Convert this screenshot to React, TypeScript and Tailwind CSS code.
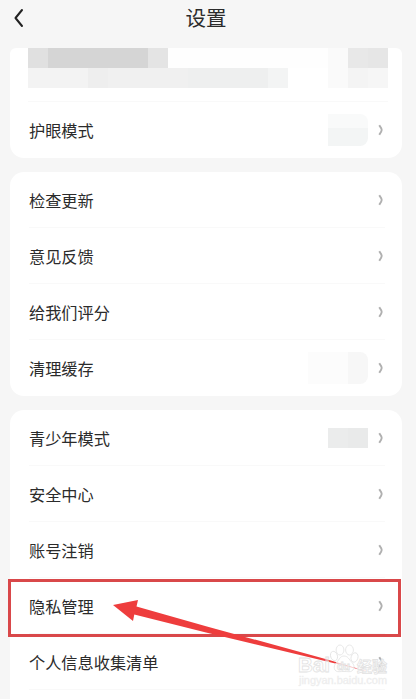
type Tile = { w: string; color: string };

const topTiles: Tile[] = [
  { w: "w-5", color: "bg-[#e0e0e0]" },
  { w: "w-[100px]", color: "bg-[#d5d5d5]" },
  { w: "w-5", color: "bg-[#e4e4e4]" },
  { w: "w-[160px]", color: "bg-[#fefefe]" },
  { w: "w-5", color: "bg-[#fafafa]" },
  { w: "w-5", color: "bg-[#e8e8e8]" },
  { w: "w-5", color: "bg-[#e6e6e6]" },
];

const bottomTiles: Tile[] = [
  { w: "w-[60px]", color: "bg-[#f3f3f3]" },
  { w: "w-5", color: "bg-[#eeeeee]" },
  { w: "w-20", color: "bg-[#f0f0f0]" },
  { w: "w-20", color: "bg-[#eeefef]" },
  { w: "w-5", color: "bg-[#f3f4f4]" },
  { w: "w-10", color: "bg-white" },
  { w: "w-5", color: "bg-[#fafafa]" },
  { w: "w-5", color: "bg-[#f4f4f4]" },
  { w: "w-5", color: "bg-[#f6f6f6]" },
];

function Tiles({ tiles }: { tiles: Tile[] }) {
  return (
    <div className="flex h-5">
      {tiles.map((tile, i) => (
        <div key={i} className={`h-5 shrink-0 ${tile.w} ${tile.color}`} />
      ))}
    </div>
  );
}

function Chevron() {
  return (
    <svg className="h-3 w-2" viewBox="0 0 8 12" fill="none" stroke="#b0b0b0" strokeWidth="1.9">
      <path d="M2.200 1.200C3.500 3 4.700 4.600 4.700 6S3.500 9 2.200 10.800" />
    </svg>
  );
}

type RowProps = {
  label: string;
  last?: boolean;
  value?: React.ReactNode;
};

function Row({ label, last, value }: RowProps) {
  return (
    <div
      className={`ml-[19px] mr-[17px] flex h-14 shrink-0 items-center border-b ${
        last ? "border-transparent" : "border-[#f9f9f9]"
      }`}
    >
      <span className="flex-1 pt-0.5 text-[16.2px] leading-6">{label}</span>
      {value}
      <Chevron />
    </div>
  );
}

function Watermark() {
  return (
    <svg
      className="absolute left-[296px] top-[642px] h-[50px] w-[96px]"
      viewBox="296 642 96 50"
      fill="#ffffff"
      stroke="#e2e2e2"
      strokeWidth="0.8"
    >
      <g fillOpacity="0.65">
        <ellipse cx="334" cy="656" rx="3.4" ry="4.8" transform="rotate(-18 334 656)" />
        <ellipse cx="340" cy="650" rx="3.9" ry="5" />
        <ellipse cx="349.500" cy="650" rx="3.9" ry="5" />
        <ellipse cx="354.500" cy="657.500" rx="3.4" ry="4.800" transform="rotate(18 354.500 657.500)" />
        <path d="M344 656c4 0 5 3.500 8 6.500 4 4 1.500 9.500-3 9.200-4-.3-6-.3-10 0-5 .3-6.500-5.200-2.500-9.200C339.500 659.500 340 656 344 656z" />
      </g>
      <g className="font-['Liberation_Sans','Noto_Sans_CJK_SC',sans-serif]">
        <text x="298" y="672" fontSize="21" fontWeight="700" fillOpacity="0.3" textLength="32" lengthAdjust="spacingAndGlyphs">
          Bai
        </text>
        <text x="337" y="670" fontSize="11" fontWeight="700" fillOpacity="0.5" textLength="13">
          du
        </text>
        <text x="357" y="672" fontSize="15" fontWeight="700" fillOpacity="0.7" textLength="30">
          经验
        </text>
        <text
          x="299"
          y="684"
          fontSize="10.500"
          fill="#eeeeee"
          stroke="#eeeeee"
          strokeWidth="0.3"
          textLength="88"
          lengthAdjust="spacingAndGlyphs"
        >
          jingyan.baidu.com
        </text>
      </g>
    </svg>
  );
}

function Arrow() {
  return (
    <svg
      className="absolute left-[113px] top-[599px] h-[74px] w-[256px]"
      viewBox="113 599 256 74"
      fill="#ee3d3d"
    >
      <path d="M113 605 138 600 136.500 606.500 206 626.200 330 660.200 366 671 326 661.300 206 632.500 134.300 614.500 133 621Z" />
    </svg>
  );
}

export default function App() {
  return (
    <div className="relative flex h-[699px] w-[416px] flex-col overflow-hidden bg-[#f6f6f6] font-['Liberation_Sans','Noto_Sans_CJK_SC',sans-serif] text-[#2b2b2b]">
      <header className="grid h-12 shrink-0 grid-cols-3 items-start">
        <svg
          className="ml-3.5 mt-2 h-5 w-2.5"
          viewBox="0 0 10 20"
          fill="none"
          stroke="#222222"
          strokeWidth="2"
          strokeLinecap="round"
          strokeLinejoin="round"
        >
          <path d="M8 2 1.500 10 8 18" />
        </svg>
        <h1 className="pt-[5px] pr-1 text-center text-[20.5px] leading-7">设置</h1>
      </header>

      <main className="ml-2.5 flex w-[392px] flex-col gap-3.5">
        <section className="shrink-0 rounded-b-[14px] rounded-t-md bg-white">
          <div className="ml-[18px] mr-3.5 h-[54px] border-b border-[#f9f9f9]">
            <Tiles tiles={topTiles} />
            <Tiles tiles={bottomTiles} />
          </div>
          <Row
            label="护眼模式"
            last
            value={
              <div className="mr-[9px] h-8 w-10 overflow-hidden rounded-r-lg">
                <div className="h-3.5 bg-[#f9fafa]" />
                <div className="h-[18px] bg-[#f3f5f5]" />
              </div>
            }
          />
        </section>

        <section className="shrink-0 rounded-[14px] bg-white">
          <Row label="检查更新" />
          <Row label="意见反馈" />
          <Row label="给我们评分" />
          <Row
            label="清理缓存"
            last
            value={
              <div className="mr-[9px] flex h-8 w-[60px] overflow-hidden rounded-r-lg">
                <div className="w-10 bg-[#fcfcfc]" />
                <div className="w-5 bg-[#f7f7f7]" />
              </div>
            }
          />
        </section>

        <section className="shrink-0 rounded-t-[14px] bg-white">
          <Row
            label="青少年模式"
            value={
              <div className="mr-[9px] flex h-5">
                <div className="w-5 bg-[#ebecec]" />
                <div className="w-5 bg-[#e9eaea]" />
              </div>
            }
          />
          <Row label="安全中心" />
          <Row label="账号注销" />
          <Row label="隐私管理" />
          <Row label="个人信息收集清单" />
          <div className="h-8" />
        </section>
      </main>

      <div className="absolute left-2 top-[579px] h-[58px] w-[393px] border-[3px] border-[#d9484a]" />
      <Arrow />
      <Watermark />
    </div>
  );
}
